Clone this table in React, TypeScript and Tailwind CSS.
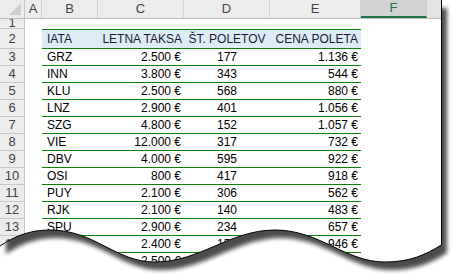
import React from 'react';

const rows = [
  { n: 3, iata: 'GRZ', taksa: '2.500 €', st: '177', cena: '1.136 €' },
  { n: 4, iata: 'INN', taksa: '3.800 €', st: '343', cena: '544 €' },
  { n: 5, iata: 'KLU', taksa: '2.500 €', st: '568', cena: '880 €' },
  { n: 6, iata: 'LNZ', taksa: '2.900 €', st: '401', cena: '1.056 €' },
  { n: 7, iata: 'SZG', taksa: '4.800 €', st: '152', cena: '1.057 €' },
  { n: 8, iata: 'VIE', taksa: '12.000 €', st: '317', cena: '732 €' },
  { n: 9, iata: 'DBV', taksa: '4.000 €', st: '595', cena: '922 €' },
  { n: 10, iata: 'OSI', taksa: '800 €', st: '417', cena: '918 €' },
  { n: 11, iata: 'PUY', taksa: '2.100 €', st: '306', cena: '562 €' },
  { n: 12, iata: 'RJK', taksa: '2.100 €', st: '140', cena: '483 €' },
  { n: 13, iata: 'SPU', taksa: '2.900 €', st: '234', cena: '657 €' },
  { n: 14, iata: 'TIV', taksa: '2.400 €', st: '158', cena: '946 €' },
  { n: 15, iata: 'ZAD', taksa: '2.500 €', st: '212', cena: '715 €' },
];

// paper outline with the torn bottom edge
const paper =
  'M0,0 H441 V245 C425,255 410,262 385,262 C345,262 320,230 275,230 C230,230 200,262 155,262 C115,262 95,230 50,230 C30,230 15,236 0,246 Z';
const edge =
  'M441.5,0 V245 C425,255 410,262 385,262 C345,262 320,230 275,230 C230,230 200,262 155,262 C115,262 95,230 50,230 C30,230 15,236 0,246';

function ColHeader({ label, w }: { label: string; w: string }) {
  return (
    <div className={`${w} h-full flex items-center justify-center border-r border-[#d4d4d4] text-[#444]`}>
      {label}
    </div>
  );
}

export default function App() {
  return (
    <div className="relative w-[458px] h-[280px] bg-white overflow-hidden font-['Liberation_Sans',Arial,sans-serif] text-[12px] text-black">
      <div className="w-[441px]">
        {/* column letters */}
        <div className="flex h-[19px] bg-[#ececec] border-b border-[#bcbcbc] text-[13px]">
          <div className="w-[25px] h-full relative border-r border-[#c8c8c8]">
            <svg className="absolute right-[3px] bottom-[3px]" width="12" height="12" viewBox="0 0 12 12">
              <path d="M12,0 V12 H0 Z" fill="#cfcfcf" />
            </svg>
          </div>
          <ColHeader label="A" w="w-[17px]" />
          <ColHeader label="B" w="w-[56px]" />
          <ColHeader label="C" w="w-[86px]" />
          <ColHeader label="D" w="w-[86px]" />
          <ColHeader label="E" w="w-[91px]" />
          <div className="w-[66px] h-full flex items-center justify-center bg-[#d2d2d2] border-b-2 border-[#217346] text-[#217346] border-r border-r-[#c8c8c8]">
            F
          </div>
          <div className="w-[14px] h-full bg-[#e4e4e4]" />
        </div>

        {/* row 1 (scrolled, partly hidden) */}
        <div className="flex h-[10px] overflow-hidden">
          <div className="w-[25px] h-full bg-[#ececec] border-r border-b border-[#c8c8c8] text-[#444] text-[13px] flex items-end justify-center leading-none overflow-hidden">
            <span className="-mb-[1px]">1</span>
          </div>
        </div>

        {/* row 2: table header */}
        <div className="flex h-[20px]">
          <div className="w-[25px] h-full bg-[#ececec] border-r border-b border-[#c8c8c8] text-[#444] text-[13px] flex items-center justify-center">
            2
          </div>
          <div className="w-[17px]" />
          <div className="flex w-[319px] h-full bg-[#ddebf7] border-y border-[#0b800b] text-[#1b1b2f]">
            <div className="w-[56px] pl-[5px] flex items-center">IATA</div>
            <div className="w-[86px] pr-[2px] flex items-center justify-end">LETNA TAKSA</div>
            <div className="w-[86px] flex items-center justify-center">ŠT. POLETOV</div>
            <div className="w-[91px] pr-[3px] flex items-center justify-end">CENA POLETA</div>
          </div>
        </div>

        {/* data rows */}
        {rows.map((r) => (
          <div key={r.n} className="flex h-[17px]">
            <div className="w-[25px] h-full bg-[#ececec] border-r border-b border-[#c8c8c8] text-[#444] text-[13px] flex items-center justify-center">
              {r.n}
            </div>
            <div className="w-[17px]" />
            <div className="flex w-[319px] h-full border-b border-[#0b800b]">
              <div className="w-[56px] pl-[5px] flex items-center">{r.iata}</div>
              <div className="w-[86px] pr-[3px] flex items-center justify-end">{r.taksa}</div>
              <div className="w-[86px] flex items-center justify-center">{r.st}</div>
              <div className="w-[91px] pr-[3px] flex items-center justify-end">{r.cena}</div>
            </div>
          </div>
        ))}
      </div>

      {/* torn edge + drop shadow */}
      <svg className="absolute inset-0" width="458" height="280" viewBox="0 0 458 280">
        <defs>
          <clipPath id="outside">
            <path d={`M0,0 H458 V280 H0 Z ${paper}`} clipRule="evenodd" />
          </clipPath>
          <filter id="soft" x="-10%" y="-10%" width="120%" height="120%">
            <feGaussianBlur stdDeviation="2" />
          </filter>
        </defs>
        <path d={`M0,0 H458 V280 H0 Z ${paper}`} fill="#fff" fillRule="evenodd" />
        <g clipPath="url(#outside)">
          <path d={paper} transform="translate(6,8)" fill="#000" opacity="0.7" filter="url(#soft)" />
        </g>
        <path d={edge} fill="none" stroke="#000" strokeWidth="1" />
      </svg>
    </div>
  );
}
